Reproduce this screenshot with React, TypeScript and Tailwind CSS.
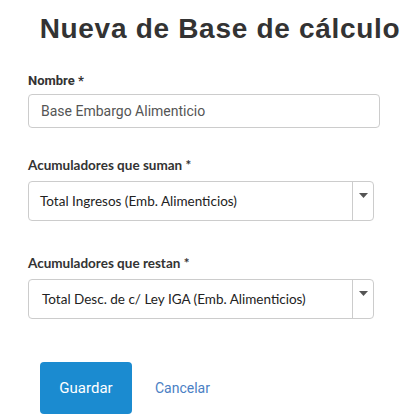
import { FC } from 'react';

const Caret: FC = () => (
  <svg width="9" height="5" viewBox="0 0 9 5" className="text-[#555]">
    <path d="M0 0h9L4.5 5z" fill="currentColor" />
  </svg>
);

const SelectBox: FC<{ label: string; value: string; pad: string }> = ({ label, value, pad }) => (
  <div className="flex flex-col">
    <label className="font-['Lato',sans-serif] text-[13.5px] font-bold text-[#333] leading-5 mb-[6px]">
      {label} *
    </label>
    <div className="flex h-[40px] w-[346px] rounded-[4px] border border-[#ccc] bg-white">
      <div className={`flex flex-1 items-center pt-[1px] ${pad} font-['Lato',sans-serif] text-[13.5px] text-[#222]`}>
        {value}
      </div>
      <div className="flex w-[21px] justify-center border-l border-[#ccc] pt-[11px]">
        <Caret />
      </div>
    </div>
  </div>
);

export default function App() {
  return (
    <div className="h-[420px] w-[420px] overflow-hidden bg-white">
      <h1 className="pt-[12px] pl-[20px] text-center font-['Liberation_Sans',Arial,sans-serif] text-[28px] font-bold leading-[34px] tracking-[0.7px] text-[#333]">
        Nueva de Base de cálculo
      </h1>

      <div className="px-[28px] pt-[25px]">
        <div className="flex flex-col">
          <label className="font-['Roboto',sans-serif] text-[13px] font-bold text-[#333] leading-5 mb-[3px]">
            Nombre *
          </label>
          <div className="flex h-[34px] w-[352px] items-center rounded-[4px] border border-[#ccc] pl-[12px] font-['Roboto',sans-serif] text-[14px] text-[#555]">
            Base Embargo Alimenticio
          </div>
        </div>

        <div className="mt-[27px]">
          <SelectBox label="Acumuladores que suman" value="Total Ingresos (Emb. Alimenticios)" pad="pl-[11px]" />
        </div>

        <div className="mt-[32px]">
          <SelectBox label="Acumuladores que restan" value="Total Desc. de c/ Ley IGA (Emb. Alimenticios)" pad="pl-[13px]" />
        </div>

        <div className="mt-[43px] flex items-center gap-[23px] pl-[12px]">
          <button className="h-[52px] w-[92px] rounded-[4px] bg-[#1b8bd0] font-['Roboto',sans-serif] text-[15px] text-white">
            Guardar
          </button>
          <a className="font-['Roboto',sans-serif] text-[14px] text-[#4a80c4]">Cancelar</a>
        </div>
      </div>
    </div>
  );
}
